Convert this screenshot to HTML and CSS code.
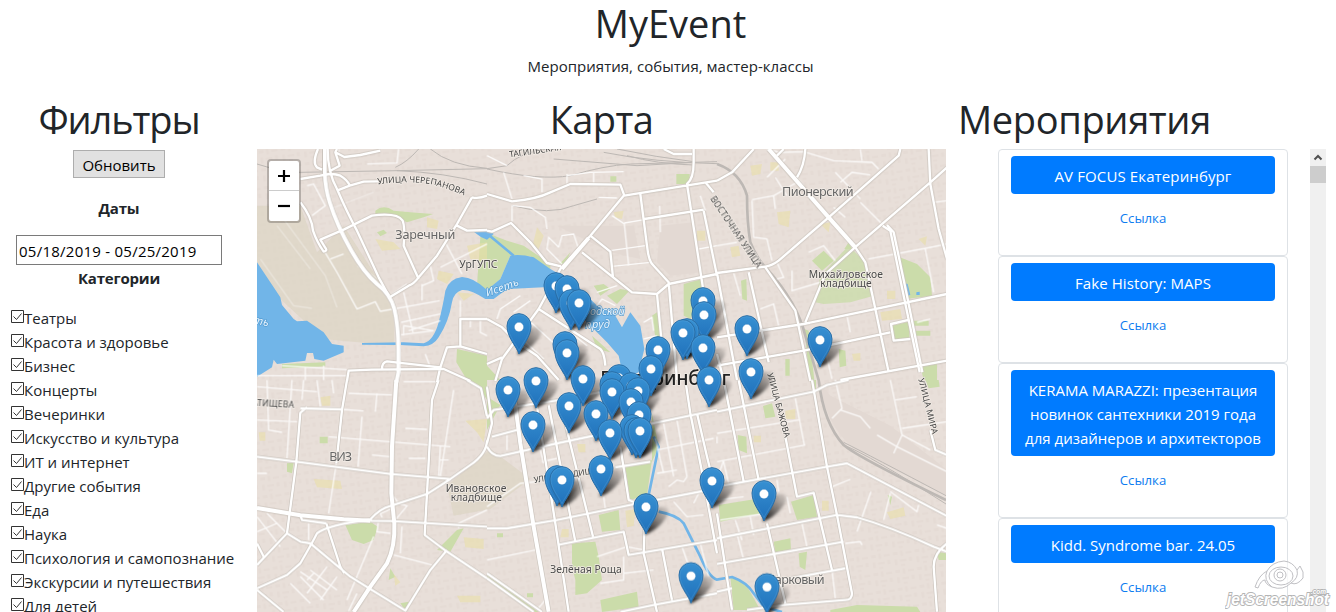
FILE: index.html
```html
<!DOCTYPE html>
<html lang="ru">
<head>
<meta charset="utf-8">
<title>MyEvent</title>
<link rel="stylesheet" href="styles.css">
</head>
<body>
<header class="head">
  <h1 class="title">MyEvent</h1>
  <p class="subtitle">Мероприятия, события, мастер-классы</p>
</header>
<main class="cols">
  <section class="filters">
    <h2 class="title t-filters">Фильтры</h2>
    <button class="refresh">Обновить</button>
    <b class="label">Даты</b>
    <input class="dates" value="05/18/2019 - 05/25/2019">
    <b class="label label-cat">Категории</b>
    <ul class="cats" id="cats"></ul>
  </section>
  <section class="mapcol">
    <h2 class="title t-map">Карта</h2>
    <div class="map">
      <svg class="canvas" viewBox="0 0 2067 1389">
        <defs>
          <pattern id="blocks" width="66" height="54" patternUnits="userSpaceOnUse" patternTransform="rotate(-8)">
            <path class="bld" d="M4 6h14v9H4zM26 4h8v16h-8zM42 8h18v7H42zM6 28h8v18H6zM22 30h20v7H22zM50 26h9v13h-9zM24 44h12v6H24z"/>
          </pattern>
          <linearGradient id="pinfill" x1="0" y1="0" x2="0" y2="1"><stop offset="0" stop-color="#3790d2"/><stop offset="1" stop-color="#1f70ba"/></linearGradient>
          <filter id="soft" x="-30%" y="-30%" width="160%" height="160%"><feGaussianBlur stdDeviation="5"/></filter>
          <linearGradient id="shade" x1="0" y1="1" x2=".8" y2="0"><stop offset="0" stop-color="#000" stop-opacity=".95"/><stop offset=".5" stop-color="#000" stop-opacity=".5"/><stop offset="1" stop-color="#000" stop-opacity=".12"/></linearGradient>
          <g id="pin">
            <path d="M0 0C-7-22-36-50-36-84a36 37 0 0 1 72 0C36-50 7-22 0 0Z" fill="url(#pinfill)" stroke="#2a6ea6" stroke-width="3"/>
            <path d="M0-10C-8-30-33-55-33-84a33 34 0 0 1 66 0C33-55 8-30 0-10Z" fill="none" stroke="#67acdc" stroke-opacity=".4" stroke-width="2"/>
            <circle cy="-81" r="14" fill="#fff" stroke="#2c77b5" stroke-width="1"/>
          </g>
          <path id="pinshadow" d="M-4 2L10-60Q30-88 62-80Q76-66 54-40Q30-10-4 2Z" fill="url(#shade)" filter="url(#soft)"/>
          <g id="wide">
            <path d="M203 0V70Q205 120 218 160Q240 230 283 305Q320 370 360 405Q400 435 412 480Q424 530 424 600V670L418 700"/>
            <g transform="translate(0 693)"><path d="M418 0L405 200L403 340L412 430Q415 500 390 550L340 620L290 696M0 384L130 406L260 418L340 422"/></g>
            <g transform="translate(690 693)"><path d="M75 0L100 190L140 440L185 696"/></g>
            <g transform="translate(1380 0)"><path d="M155 0L335 205L415 295"/></g>
            <g transform="translate(690 0)"><path d="M305 267L225 360"/></g>
          </g>
          <g id="main">
            <path d="M212 0Q212 70 240 120Q270 190 300 245Q330 310 365 385L395 440M130 90L190 80Q225 70 250 80Q268 90 278 108M240 125L278 110L320 98L365 97M130 160Q165 205 168 245Q180 280 200 308Q212 305 206 298L190 272L260 242L345 200Q420 190 437 215Q445 235 440 290L485 390M645 145L600 225L540 320L485 385Q470 405 455 410L398 445M645 145Q665 150 690 140M600 230L630 245L690 243M183 0Q165 40 180 55L195 62M240 0L235 10L262 24L310 18L370 5M235 10L248 50L220 65M375 660Q375 640 390 637L550 655L570 595L610 592L690 615M270 696L275 665L345 662L560 660L640 696M550 655L540 700M610 592V510H690"/>
            <g transform="translate(690 0)"><path d="M0 135L75 157Q150 150 190 130L250 105L400 107L412 140L690 95M410 140L310 260L220 360L155 480L45 630L25 696M620 0V40Q620 90 600 105L650 430M530 0L560 15H615M0 245L15 248L72 222L130 280L180 342L222 352M310 260L370 308L378 385M285 310L435 430L510 435L545 405L690 375M460 135L480 290Q485 340 500 350L545 400L570 693M510 435L535 693M155 480L340 600Q352 610 355 650M655 100L680 130M650 185L690 380M472 210L650 182M0 510L45 535L90 580L150 620L215 693M0 645L45 625"/></g>
            <g transform="translate(1380 0)"><path d="M0 95L45 70L110 0M180 20L200 0M265 0Q262 50 240 85M550 0L545 20L335 205L185 335Q165 350 145 353L0 372M415 295L445 340L475 480L515 670M635 0L640 105L665 240L690 330M690 55L640 100L420 290L325 375L265 520M497 230L520 245L560 440L608 670M510 228L530 250L572 450L616 670M0 565L260 525L690 435M0 650L260 605L520 550M578 512L522 525L530 575L580 570M145 355L235 485L280 696M0 372L60 693M95 370L155 640M0 615L20 693M370 693L690 635"/></g>
            <g transform="translate(0 693)"><path d="M340 422L400 423L690 440M270 0L255 90L238 250M130 85L255 88M150 82L130 98L118 245L90 460L130 485L160 490L280 590L345 630L445 692L520 570L570 510M0 230L118 245L400 282L580 297M0 625L90 585L130 550Q165 490 180 460Q210 435 340 418Q370 385 400 378L510 342L580 297L640 255Q690 220 690 180M545 0L525 60L510 340L503 465L570 515L690 595M208 430L250 560L262 580M130 405L135 420L208 430M0 555L90 460M0 490L20 530M0 630L80 696M630 0L672 25L690 110"/></g>
            <g transform="translate(690 693)"><path d="M0 115L20 90L220 60L400 25M0 200Q15 228 40 228L210 190L690 90M0 445L60 445L210 420L430 375L690 325M15 170L90 150M150 80L205 430L245 696M185 75L265 485M235 130L318 470M212 495L410 455L425 525L690 480M400 200L425 360L475 380L470 520L510 696M385 262L490 245M400 696L500 675L690 640M595 0L610 100L650 300L690 520M630 100L660 230L690 350M525 505L555 660M0 580L165 696M0 595L140 696M0 20L15 130L0 190"/></g>
            <g transform="translate(1380 693)"><path d="M0 95L290 35L330 15L395 0M285 0L330 260L360 405L405 640Q405 660 385 660L200 675L90 690M0 320L330 260L390 250L690 408M0 475L360 405L420 412Q520 440 650 500L690 515M0 552L380 485M20 0L80 305M65 0L125 300M150 430L205 670M205 170L240 350L290 338L345 570M0 400L45 690M690 490Q650 520 650 560L660 696M165 605L385 565M640 150L655 210L690 225M0 635L45 625"/></g>
          </g>
        </defs>
        <rect width="2067" height="1389" fill="#e8dfd9"/>
        <rect width="2067" height="1389" fill="url(#blocks)"/>
        <path class="waste" d="M0 170L130 170L180 310L260 230L395 440L412 480V590L200 570L70 450L0 340Z"/>
        <path class="waste" d="M570 1010L640 950L700 900L820 990L700 1080L590 1100Z" opacity=".55"/>
        <path class="yard" d="M1690 700L1720 740L1900 830L2067 960V1040L1790 900Q1700 820 1690 700ZM900 230L1130 230L1150 330L1060 310ZM1210 230L1310 220L1330 370L1240 380L1200 340Z"/>
        <g class="park">
          <path d="M355 185Q380 165 410 185L460 190L528 195L500 205L450 220L410 200L355 195ZM600 600L690 620V720L630 693L598 640ZM360 250L380 242L390 252L370 262ZM75 645L205 640V652L75 658Z"/>
          <g transform="translate(690 0)"><path d="M-20 265L0 252L60 275L110 290L190 345L190 370L130 322L70 320L40 390L0 425L-30 410ZM568 75H608V105H568ZM370 82H388V98H370ZM320 410L350 405L370 420L340 440ZM400 420L427 425L390 465L360 440ZM590 405L645 390L650 430L610 510L590 500ZM495 500L510 490L525 570L505 565ZM315 560L370 610L330 600ZM250 310L235 345L218 345ZM0 650L40 693H0Z"/></g>
          <g transform="translate(1380 0)"><path d="M285 335L320 305L350 335L315 365ZM382 300L395 280L405 300ZM548 325L600 345L640 385L645 440L565 450ZM72 395L88 390L90 455L76 450ZM525 530L575 518L578 570L535 573ZM590 515H635V530H590ZM595 545H640V560H595ZM365 600L385 605L388 650L368 655ZM262 540L275 545L292 693H278ZM610 650L660 645V693H620ZM205 630H218V680H205Z"/><path opacity=".8" d="M395 290L440 335L470 440L400 460L320 465L295 460L310 380Z"/></g>
          <g transform="translate(0 693)"><path d="M265 435L340 425L362 440L350 480L320 492L285 480ZM90 250L110 248L105 280L90 275ZM188 170H212V190H188ZM600 450L620 445L580 515L540 510ZM430 670L455 665L445 690ZM660 10L690 15V60ZM400 565L415 590L395 600Z"/></g>
          <g transform="translate(690 693)"><path d="M415 260L495 240L480 345L430 360ZM335 405L395 390L400 450L345 455ZM255 490L325 485L335 530L345 600L300 640L265 645L265 600L255 560ZM340 660L450 635L455 680L345 696ZM30 460H48V472H30ZM120 640H138V652H120ZM0 50L40 75L0 150ZM495 100L515 200L495 245ZM0 585L155 696H145L0 592Z"/></g>
          <g transform="translate(1380 693)"><path d="M5 375L130 355L135 400L10 425ZM222 365L290 345L300 410L240 420ZM170 485L220 475L222 510L175 520ZM245 520L270 515L265 570L248 560ZM62 165L88 170L90 220L65 210ZM138 78L165 70L175 110L145 115ZM40 590L85 610L130 690H50ZM340 690L420 675L600 680L610 696H340ZM280 0H297V30H285ZM660 515L690 520V540H665ZM625 0H665L668 20L635 25ZM512 345L525 350L520 375Z"/></g>
        </g>
        <g class="school">
          <path d="M355 270L410 280L430 300L375 305ZM510 205L545 215L540 240L510 235ZM545 365L590 375L570 405L540 390ZM630 290L690 280V340L640 330ZM600 430L650 435L620 455Z"/>
          <path d="M840 235L860 260L845 300L828 285ZM1070 190L1100 185L1095 210L1075 205ZM1320 245H1345V275H1320ZM1480 50L1515 45L1510 75L1485 80ZM1540 40H1565V65H1540ZM1560 190L1600 185L1595 235L1565 225ZM1690 225L1720 220L1715 250ZM1890 425H1915V450H1890ZM1985 270L2010 262L2005 290ZM1870 490L1930 480L1935 510L1875 515ZM1420 295L1445 290L1450 320L1425 325ZM1785 615L1810 612V635H1790Z"/>
          <path d="M190 745L220 740V770H195ZM625 815L690 810L680 880L660 850ZM170 990L250 995L255 1020L180 1015ZM620 1165L680 1170V1200L625 1195ZM915 1140H935V1165H910ZM1105 1085L1135 1080L1130 1130L1110 1135ZM960 885H985V910H965ZM1890 1090L1940 1075L1945 1100L1900 1110ZM1695 1055H1715V1085H1695ZM1490 860H1512V880H1490ZM1585 785L1615 780V810H1585ZM5 850H25V875H8ZM410 1275L430 1300L415 1310ZM600 1340H670V1360H610Z"/>
        </g>
        <g class="water">
          <path d="M0 340L40 400L70 445L75 468L110 510L120 517L150 515L200 550L225 585L260 590V610L200 635L172 630L168 612L150 612L145 635L60 645L50 632L45 655L0 683Z"/>
          <path d="M315 582L440 580L500 583Q530 575 545 520Q560 460 565 425Q575 390 615 384Q650 385 690 423L730 390L760 320Q790 315 830 325L880 360L950 400L1020 470L1075 500L1095 535L1120 490L1150 530L1162 600L1145 670L1100 690L1085 620L1050 580L980 510L890 440L860 415L750 420L710 450L685 450Q640 420 615 423Q590 430 585 460Q575 520 545 565Q530 590 500 592L430 588L315 587Z"/>
          <path d="M650 248L700 245L710 255L690 272Q670 265 650 248ZM1942 402L1952 405L1960 438L1950 440ZM1978 430L1988 428V438H1978Z"/>
          <path class="stream" d="M700 262L770 320M1190 863L1205 893L1175 1038M1205 1088Q1260 1098 1280 1123L1330 1223Q1355 1283 1380 1292L1425 1284Q1470 1300 1490 1333L1520 1373L1575 1389"/>
        </g>
        <g class="rail">
          <path d="M0 45Q60 65 130 70L420 65L690 59L750 50Q790 10 870 0M415 55Q450 40 485 0M520 0Q580 50 690 58M420 65Q560 70 690 105M690 60Q850 95 940 80Q1040 50 1120 45L1380 38M1040 10Q1190 40 1380 44M890 30L1140 50L1310 40M1110 20Q1200 45 1310 48M1080 0Q1200 25 1310 38M765 170Q880 200 950 170L1020 150"/>
          <path class="railwide" d="M1380 45Q1450 70 1470 140Q1470 220 1480 280Q1500 330 1530 360Q1620 460 1645 560L1685 693Q1700 823 1760 888Q1800 923 2067 1053"/>
          <path d="M1760 888Q1840 920 2067 1065M1760 880Q1840 920 2067 1040"/>
        </g>
        <g class="minor">
          <path d="M203 308L240 370L300 480L355 458L370 487L548 455M440 430L468 550M400 440L450 405M495 405V455M432 520L550 495M432 557L530 545L440 530V560M455 545L550 515M550 355L690 285M565 280L615 375M495 410L530 395L520 350M610 455V510M150 110L170 105L205 170L165 200M220 330L260 315M75 650L270 662M0 680H270M200 650V693M145 655V693M505 615L520 655M640 510V535M670 510V550L690 560M330 45L420 42L425 0M245 0V20"/>
          <path class="faint" d="M80 210L205 380L240 475M10 330L110 470L165 478M60 230L160 360M220 180L350 130M300 350L380 400"/>
          <g transform="translate(690 0)"><path d="M50 70L75 150M75 170V220M75 170L130 175L175 205L180 240M110 80L165 90V130M240 110V80L310 70L410 68M240 75V100M320 70V105M335 145L390 147M375 200L412 225L425 350M412 222L472 212M370 305L475 290M375 352L490 340M518 170L520 250M635 300L690 290M180 300L225 345M180 300L185 265L215 295M215 295L225 260L260 255L275 300M330 430L390 410M330 470L345 450L385 470M80 490L130 455M30 510L40 480L100 440M0 20L60 50M470 520L495 505L500 545M470 570L510 560M110 500L230 610M80 545L170 630M190 500L300 590M640 140L655 185"/></g>
          <g transform="translate(1380 0)"><path d="M150 85L205 30M150 0L185 10L260 8M260 8L350 35L465 40L485 60M370 100L405 70L460 78M430 0L435 35M355 70L430 150M105 155L110 265L150 270L165 335M105 152L170 140L175 180M170 140L240 100M175 85L210 140M240 85L260 110M350 175L385 205M430 160L500 230M455 330L640 295L690 285M225 365V425L310 400M275 310L320 290L355 335M130 480L170 465L185 530M50 372L70 440M180 340L200 385L180 390M310 540L345 690M390 500L400 550M625 300L650 430M600 520L640 510M0 290L60 280M650 160L690 155"/></g>
          <g transform="translate(0 693)"><path d="M238 250L215 400M275 40L405 45M255 88L320 93M315 110L303 260M215 170L580 200M590 30L550 290M180 0L190 80M30 0L35 150L75 157M105 0L90 235M445 145L510 148M360 40L355 95M440 5H545M550 240H575M550 200L545 290M410 525L525 555M435 440L430 520M350 470L270 660M690 390L605 430V445M130 590L200 660M160 570L240 630M100 610L160 670M210 560L150 640M240 590L190 660M150 600L170 580M345 225L400 230M455 235H505M0 120L120 125M0 20L180 35M0 280H30M410 380Q390 395 370 400L375 412M410 350L425 370L450 378L415 420M130 575L210 630M0 410L70 500M30 400L90 460M0 455L60 430M140 0L135 60M300 640L275 693M365 420L360 455L400 460M155 430V480M225 0L230 40"/></g>
          <g transform="translate(690 693)"><path d="M0 540L145 510M0 380L100 310L150 305M330 530L420 500M340 610L410 600V530M410 580L500 570M420 500L470 510M505 175L530 280M530 130L560 290M570 120L600 290M510 210L680 175M510 280L570 270M545 320L570 300L590 305L600 290M165 245L210 235M160 210L170 250M110 0L125 50M60 165V210M350 350L355 385M560 365L600 410L650 405M585 500L620 600M640 490L665 590M150 690L175 660M620 370L635 340"/></g>
          <g transform="translate(1380 693)"><path d="M355 0L375 85L345 115M370 90L430 110L460 145M480 165L540 200L690 275M520 0L555 165L530 220M555 165L640 210M535 60L600 50M555 145L690 125M0 245L265 195M235 55L262 195M0 160L245 120M345 320L400 298M462 335L420 455M520 335L600 395L605 375M520 340L500 420M180 300L185 335M0 300L20 240M20 245L35 310M55 420L75 480M100 410L110 465M255 430L270 500M10 420L150 400M60 460L80 540M385 490L430 485L435 495M345 570L355 655M210 350L220 400M0 190V170M0 360L80 350M660 435L690 445"/></g>
        </g>
        <g class="casing"><use href="#main"/><use href="#wide" class="w"/></g>
        <g class="fill"><use href="#main"/><use href="#wide" class="w"/></g>
        <path id="curve" fill="none" d="M362 106Q470 92 540 110Q590 124 640 148"/>
        <path id="isetPath" fill="none" d="M690 442Q740 428 800 402"/>
        <g class="lbl">
          <text class="street"><textPath href="#curve" textLength="266" lengthAdjust="spacingAndGlyphs">УЛИЦА ЧЕРЕПАНОВА</textPath></text>
          <text class="street" x="758" y="25" textLength="158" transform="rotate(-8 758 25)">ТАГИЛЬСКАЯ</text>
          <text class="street" x="1358" y="150" textLength="252" transform="rotate(56 1358 150)">ВОСТОЧНАЯ УЛИЦА</text>
          <text class="street" x="1531" y="674" textLength="200" transform="rotate(75 1531 674)">УЛИЦА БАЖОВА</text>
          <text class="street" x="1984" y="690" textLength="172" transform="rotate(76 1984 690)">УЛИЦА МИРА</text>
          <text class="street" x="-15" y="770" textLength="126" transform="rotate(3 -15 770)">АТИЩЕВА</text>
          <text class="street" x="832" y="1002" textLength="225" transform="rotate(-9 832 1002)">УЛИЦА РАДИЩЕВА</text>
          <text class="place" x="415" y="270" textLength="180">Заречный</text>
          <text class="place" x="1575" y="140" textLength="215">Пионерский</text>
          <text class="place" x="217" y="937" textLength="68">ВИЗ</text>
          <text class="place" x="1527" y="1305" textLength="176">Парковый</text>
          <text class="mid" x="607" y="356" textLength="114">УрГУПС</text>
          <text class="mid" x="1655" y="386" textLength="223">Михайловское</text>
          <text class="mid" x="1690" y="415" textLength="154">кладбище</text>
          <text class="mid" x="566" y="1028" textLength="182">Ивановское</text>
          <text class="mid" x="581" y="1056" textLength="154">кладбище</text>
          <text class="mid" x="880" y="1271" textLength="214">Зелёная Роща</text>
          <text class="river"><textPath href="#isetPath" textLength="104">Исеть</textPath></text>
          <text class="river" x="949" y="498" textLength="154">Городской</text>
          <text class="river" x="985" y="538" textLength="74">пруд</text>
          <text class="river" x="-12" y="525" transform="rotate(12 0 525)">ть</text>
          <text class="city" x="1030" y="708" textLength="390">Екатеринбург</text>
        </g>
        <g id="shadows"></g>
        <g id="pins"></g>
      </svg>
      <div class="zoom"><span class="zin"><svg viewBox="0 0 14 14"><path d="M1 7h12M7 1v12"/></svg></span><span><svg viewBox="0 0 14 14"><path d="M1 7h12"/></svg></span></div>
    </div>
  </section>
  <section class="events">
    <h2 class="title t-events">Мероприятия</h2>
    <div class="pane">
      <div class="list">
        <article class="card"><a class="btn b1">AV FOCUS Екатеринбург</a><a class="link">Ссылка</a></article>
        <article class="card"><a class="btn b2">Fake History: MAPS</a><a class="link">Ссылка</a></article>
        <article class="card"><a class="btn">KERAMA MARAZZI: презентация<br>новинок сантехники 2019 года<br>для дизайнеров и архитекторов</a><a class="link">Ссылка</a></article>
        <article class="card"><a class="btn">Kidd. Syndrome bar. 24.05</a><a class="link">Ссылка</a></article>
      </div>
      <div class="bar"><svg class="up" viewBox="0 0 16 17"><path d="M4.5 10.5L8 7l3.5 3.5"/></svg><div class="thumb"></div></div>
    </div>
  </section>
</main>
<svg class="mark" viewBox="0 0 108 52">
  <g class="eye"><path d="M30 29Q34 17 42 13Q47 4 59 3Q68 4 72 12L75 8L78 14V20Q72 28 66 25Q58 33 47 29Q40 26 40 22Q36 22 33 30Z"/><path d="M42 13Q38 22 47 29M72 12Q74 20 66 25"/><ellipse cx="56" cy="18" rx="12" ry="9"/><circle cx="55" cy="17" r="6"/><circle cx="55" cy="17" r="3"/></g>
  <text class="mk" x="2" y="47" textLength="102" lengthAdjust="spacingAndGlyphs">jetScreenshot</text>
  <text class="mkc" x="86" y="35.5" textLength="15" lengthAdjust="spacingAndGlyphs">.com</text>
</svg>
<script src="script.js"></script>
</body>
</html>
```
FILE: styles.css
```css
* { box-sizing: border-box; }
body { margin: 0; height: 612px; overflow: hidden; position: relative; background: #fff; color: #212529; font: 15px/24px "Open Sans", "Noto Sans", sans-serif; }
.title { margin: 0; flex: none; font-size: 38px; line-height: 47px; height: 48px; font-weight: 400; white-space: nowrap; text-align: center; }
.t-filters { letter-spacing: -1.1px; }
.t-map { letter-spacing: -.6px; }
.t-events { text-align: left; letter-spacing: -.35px; }
.head { height: 96px; padding-left: 5px; text-align: center; }
.subtitle { margin: 6px 0 0; letter-spacing: .03px; }
.cols { display: flex; height: 516px; }
.filters { width: 238px; margin-right: 19px; display: flex; flex-direction: column; align-items: center; }
.refresh { margin-top: 6px; width: 92px; height: 28px; flex: none; padding: 2px 0 0; border: 1px solid #adadad; background: #e1e1e1; color: #000; font: inherit; line-height: 22px; }
.label { flex: none; margin-top: 18px; line-height: 24px; letter-spacing: -.2px; }
.dates { margin-top: 15px; width: 206px; height: 30px; flex: none; border: 1px solid #7a7a7a; padding: 2px 2px 0; color: #000; font: inherit; letter-spacing: .25px; }
.label-cat { margin-top: 1px; }
.cats { flex: none; list-style: none; margin: 16px 0 0; padding: 0 0 0 11px; align-self: stretch; }
.cats li { display: flex; align-items: center; height: 24px; white-space: nowrap; }
.cats svg { width: 13px; height: 13px; margin-top: -3px; flex: none; fill: none; stroke: #333; }
.mapcol { width: 689px; flex: none; }
.map { margin-top: 5px; height: 463px; position: relative; overflow: hidden; }
.canvas { display: block; width: 689px; height: 463px; }
.bld { fill: #ddd1c8; opacity: .25; }
.waste { fill: #ddd6c6; opacity: .8; }
.yard { fill: #e3d9d3; }
.park { fill: #cbdcaa; }
.school { fill: #eadfa8; opacity: .6; }
.water { fill: #71b5e8; }
.stream { fill: none; stroke: #71b5e8; stroke-width: 8; }
.rail { fill: none; stroke: #bdb8b4; stroke-width: 3; }
.railwide { stroke-width: 8; }
.minor { fill: none; stroke: #fff; stroke-width: 4; opacity: .85; }
.faint { opacity: .4; }
.casing { fill: none; stroke: #cbc4bd; stroke-width: 11; stroke-linejoin: round; }
.casing .w { stroke-width: 16; }
.fill { fill: none; stroke: #fff; stroke-width: 7; stroke-linejoin: round; }
.fill .w { stroke-width: 12; }
.lbl { font-family: "Noto Sans", sans-serif; fill: #555; stroke: #f2ece6; stroke-width: 5; paint-order: stroke; stroke-linejoin: round; }
.street { font-size: 25.5px; fill: #444; }
.place { font-size: 38px; fill: #666; }
.mid { font-size: 31px; fill: #4c4c4c; }
.river { font-size: 33px; font-style: italic; fill: #e8f5ff; stroke: #549bd0; stroke-width: 4; }
.city { font-size: 59px; font-weight: 500; fill: #222; }
.zoom { position: absolute; left: 10px; top: 10px; width: 34px; height: 64px; border: 2px solid rgba(0,0,0,.22); border-radius: 4px; background: #fff; background-clip: padding-box; }
.zoom span { display: flex; height: 30px; align-items: center; justify-content: center; }
.zoom .zin { border-bottom: 1px solid #ccc; }
.zoom svg { width: 14px; height: 14px; stroke: #000; stroke-width: 2.2; }
.events { flex: none; width: 368px; margin-left: 12px; }
.pane { display: flex; justify-content: space-between; margin-top: 5px; padding-left: 40px; height: 463px; overflow: hidden; }
.list { width: 290px; }
.card { border: 1px solid #dee2e6; border-radius: 4px; padding: 6px 12px 24px; display: flex; flex-direction: column; }
.btn { background: #007bff; color: #fff; border-radius: 4px; padding: 8px 0 6px; text-align: center; white-space: nowrap; }
.b1 { letter-spacing: .12px; }
.b2 { letter-spacing: .1px; }
.link { margin-top: 13px; height: 24px; line-height: 22px; color: #0d7cf0; font-size: 13.2px; text-align: center; }
.bar { width: 16px; background: #f0f0f0; }
.up { display: block; width: 16px; height: 17px; fill: none; stroke: #505050; stroke-width: 2; }
.thumb { height: 17px; background: #cdcdcd; }
.mark { position: absolute; left: 1225px; top: 558px; width: 108px; height: 52px; }
.eye { fill: rgba(255,255,255,.5); stroke: #c0c0c4; }
.mk, .mkc { font: italic bold 17px "Liberation Sans", sans-serif; fill: #fff; stroke: #b4b4b4; stroke-width: 1.8; paint-order: stroke; }
.mkc { font-size: 7px; }
```
FILE: script.js
```js
const cats = ["Театры", "Красота и здоровье", "Бизнес", "Концерты", "Вечеринки", "Искусство и культура", "ИТ и интернет", "Другие события", "Еда", "Наука", "Психология и самопознание", "Экскурсии и путешествия", "Для детей"];
document.getElementById("cats").innerHTML = cats.map(c =>
  `<li><svg viewBox="0 0 13 13"><path d="M.5.5h12v12H.5zM2.5 6.5l3 3 5-6"/></svg><span>${c}</span></li>`).join("");

// Pin head centres on the map, in map pixels.
const pins = [[299,137],[310,140],[314,154],[322,154],[262,178],[308,196],[310,204],[401,201],[394,220],[446,152],[447,166],[426,184],[430,183],[446,199],[490,180],[563,191],[494,223],[452,231],[279,232],[251,241],[326,230],[312,257],[276,276],[339,265],[362,229],[355,236],[374,237],[355,243],[381,242],[374,253],[382,266],[353,284],[375,279],[379,282],[383,282],[344,320],[300,330],[305,331],[455,332],[507,345],[389,358],[434,427],[510,438]];
pins.sort((a, b) => a[1] - b[1]);
const draw = id => pins.map(([x, y]) => `<use href="#${id}" x="${x * 3}" y="${(y + 27) * 3}"/>`).join("");
document.getElementById("shadows").innerHTML = draw("pinshadow");
document.getElementById("pins").innerHTML = draw("pin");
```
